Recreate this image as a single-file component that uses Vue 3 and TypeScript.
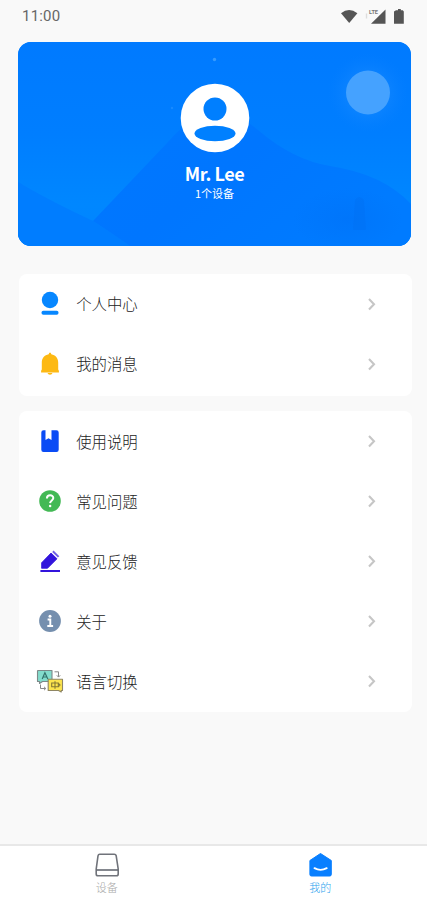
<script setup lang="ts">
import { ref } from 'vue'

type IconName = 'user' | 'bell' | 'book' | 'help' | 'pen' | 'info' | 'lang'
interface MenuItem {
  icon: IconName
  label: string
}

const groups: MenuItem[][] = [
  [
    { icon: 'user', label: '个人中心' },
    { icon: 'bell', label: '我的消息' },
  ],
  [
    { icon: 'book', label: '使用说明' },
    { icon: 'help', label: '常见问题' },
    { icon: 'pen', label: '意见反馈' },
    { icon: 'info', label: '关于' },
    { icon: 'lang', label: '语言切换' },
  ],
]

const activeTab = ref<'devices' | 'mine'>('mine')
</script>

<template>
  <div class="screen">
    <header class="status">
      <span class="time">11:00</span>
      <svg class="signals" width="66" height="20" viewBox="0 0 66 20">
        <path d="M2 7.200Q10 1 18.400 7.200L10.200 17Z" fill="#555" />
        <path d="M27.500 7.500v5" stroke="#ddd" stroke-width="1.400" />
        <text x="30" y="8.200" font-size="6.200" font-weight="700" textLength="9" lengthAdjust="spacingAndGlyphs" fill="#777">LTE</text>
        <path d="M46.500 3.500V17.800H32Z" fill="#555" />
        <path d="M57 4.200h2V3h2.800v1.200h2L64.800 5.500V17.800H55V5.500Z" fill="#555" />
      </svg>
    </header>

    <section class="profile">
      <svg class="scene" viewBox="0 0 393 204" preserveAspectRatio="none">
        <defs>
          <linearGradient id="sky" x1="0" y1="0" x2="0" y2="1">
            <stop offset="0" stop-color="#007aff" />
            <stop offset=".45" stop-color="#007eff" />
            <stop offset=".8" stop-color="#0087ff" />
            <stop offset="1" stop-color="#0084ff" />
          </linearGradient>
          <linearGradient id="hill" x1="0" y1="0" x2="1" y2=".5">
            <stop offset="0" stop-color="#0078ff" />
            <stop offset=".5" stop-color="#0076ff" />
            <stop offset="1" stop-color="#007bff" />
          </linearGradient>
          <radialGradient id="glow">
            <stop offset=".5" stop-color="#1c8cff" stop-opacity=".4" />
            <stop offset="1" stop-color="#0a80ff" stop-opacity="0" />
          </radialGradient>
          <radialGradient id="shade">
            <stop offset="0" stop-color="#006ff5" stop-opacity=".45" />
            <stop offset="1" stop-color="#006ff5" stop-opacity="0" />
          </radialGradient>
        </defs>
        <rect width="393" height="204" fill="url(#sky)" />
        <path d="M0 140Q30 158 75 179Q95 192 112 204H0Z" fill="#007dff" />
        <path d="M75 179L150 100Q195 48 240 88Q275 118 312 124Q365 132 393 162V204H112Q92 190 75 179Z" fill="url(#hill)" />
        <ellipse cx="330" cy="178" rx="55" ry="32" fill="url(#shade)" />
        <path d="M337 158q4-6 9 0l2 30h-13Z" fill="#006df0" opacity=".3" />
        <circle cx="350" cy="51" r="40" fill="url(#glow)" />
        <circle cx="350" cy="50.500" r="22" fill="#45a2ff" />
        <circle cx="196.500" cy="17.500" r="1.700" fill="#369bff" />
        <circle cx="154" cy="66" r="1.200" fill="#188aff" />
      </svg>
      <svg class="avatar" width="70" height="70" viewBox="0 0 70 70">
        <circle cx="35" cy="35" r="34.300" fill="#fff" />
        <circle cx="35" cy="26" r="11.500" fill="#007fff" />
        <ellipse cx="35" cy="50.500" rx="20.500" ry="7.700" fill="#0080ff" />
      </svg>
      <h1 class="name">Mr. Lee</h1>
      <p class="count">1个设备</p>
    </section>

    <main class="groups">
      <ul v-for="(group, index) in groups" :key="index" class="group">
        <li v-for="item in group" :key="item.icon" class="row">
          <svg class="icon" width="28" height="28" viewBox="0 0 28 28">
            <template v-if="item.icon === 'user'">
              <circle cx="14" cy="10" r="8.200" fill="#0787ff" />
              <rect x="5.500" y="20.800" width="17" height="4" rx="1.800" fill="#0787ff" />
            </template>
            <template v-else-if="item.icon === 'bell'">
              <path d="M14 2.500q1 0 1.300 1.700c4.200.8 6.900 4 6.900 8.300v7l.7 1.200v1.700H5.100v-1.700l.7-1.200v-7c0-4.300 2.700-7.500 6.900-8.300Q13 2.500 14 2.500Z" fill="#fdb913" />
              <path d="M11.500 23h5q-.5 1.700-2.500 1.700t-2.500-1.700Z" fill="#fdb913" />
            </template>
            <path
              v-else-if="item.icon === 'book'"
              d="M5.300 5.500Q5.300 3.300 7.500 3.300H9.500V13L12.500 11.200L15.500 13V3.300H20.500Q22.700 3.300 22.700 5.500V22.700Q22.700 24.900 20.500 24.900H7.500Q5.300 24.900 5.300 22.700Z"
              fill="#0a4bf5"
            />
            <template v-else-if="item.icon === 'help'">
              <circle cx="14" cy="14" r="10.800" fill="#43b955" />
              <path d="M10.900 11.400c.1-4 6.500-4 6.400-.3 0 2.300-3.100 2.400-3.200 5" fill="none" stroke="#fff" stroke-width="2" />
              <circle cx="14.100" cy="19" r="1.250" fill="#fff" />
            </template>
            <template v-else-if="item.icon === 'pen'">
              <path d="M5.600 21.300V15.800L15 6L21 11.800L11.500 21.300Z" fill="#3214dc" stroke="#3214dc" stroke-width=".8" stroke-linejoin="round" />
              <path d="M16.200 4.900L17.600 3.500L23.300 9.200L21.900 10.600Z" fill="#6f5fe6" />
              <rect x="4.400" y="23" width="19.600" height="2" fill="#3214dc" />
            </template>
            <template v-else-if="item.icon === 'info'">
              <circle cx="14" cy="14" r="10.900" fill="#758fae" />
              <circle cx="14" cy="9.300" r="1.500" fill="#fff" />
              <path d="M11.600 12.500h2.700v6.200M11.300 19h5.800" fill="none" stroke="#fff" stroke-width="1.900" />
            </template>
            <template v-else>
              <path d="M2 3.500H16V14.500H6.500L3.500 16.500V14.500H1.500V4Z" fill="#83dccc" stroke="#7d8989" stroke-width="1.100" stroke-linejoin="round" />
              <path d="M6.200 12L8.900 5.800L11.800 12M7.300 10h3.400" fill="none" stroke="#34736c" stroke-width="1.200" />
              <path d="M18.500 4.800h4v5M20.800 8.300l1.700 1.800 1.700-1.800M4.500 17.500v4h5M8 19.800l1.800 1.700L8 23.200" fill="none" stroke="#888" stroke-width="1" />
              <path d="M12.200 12.200H26.500V23.500H25.200V25L22.500 23.500H12.200Z" fill="#fce44d" stroke="#8f8664" stroke-width="1.100" stroke-linejoin="round" />
              <path d="M15.700 16h6.600v3.800h-6.600ZM19 14.300v7.500M22 16l2 2-2 2" fill="none" stroke="#857a34" stroke-width="1.100" />
            </template>
          </svg>
          <span class="label">{{ item.label }}</span>
          <svg class="chevron" width="10" height="14" viewBox="0 0 10 14">
            <path d="M2 2L7 7.200L2 12.400" fill="none" stroke="#c6c6c6" stroke-width="2.100" />
          </svg>
        </li>
      </ul>
    </main>

    <nav class="tabs">
      <button class="tab" :class="{ active: activeTab === 'devices' }" @click="activeTab = 'devices'">
        <svg width="28" height="26" viewBox="0 0 28 26">
          <path d="M6.700 2.200H21.300Q22.800 2.200 23.200 3.800L25.200 17V22Q25.200 23.800 23.400 23.800H5Q3.200 23.800 3.200 22V17L5 3.800Q5.300 2.200 6.700 2.200Z" fill="#fff" stroke="#70737a" stroke-width="1.600" />
          <path d="M3.400 18H25" stroke="#666a72" stroke-width="1.600" />
        </svg>
        <span>设备</span>
      </button>
      <button class="tab" :class="{ active: activeTab === 'mine' }" @click="activeTab = 'mine'">
        <svg width="28" height="26" viewBox="0 0 28 26">
          <path d="M14.500 1.500L25.300 8.500V22.500Q25.300 24 23.800 24H5.400Q3.900 24 3.900 22.500V8.500Z" fill="#087fff" stroke="#087fff" stroke-width="1" stroke-linejoin="round" />
          <path d="M8.500 16.200Q14.500 19.500 20.700 16.200" fill="none" stroke="#fff" stroke-width="1.900" stroke-linecap="round" />
        </svg>
        <span>我的</span>
      </button>
    </nav>
  </div>
</template>

<style>
body {
  background: #f9f9f9;
}
</style>

<style scoped>
.screen {
  display: flex;
  flex-direction: column;
  box-sizing: border-box;
  width: 100%;
  height: 100vh;
  overflow: hidden;
  background: #f9f9f9;
  font-family: Roboto, 'Noto Sans CJK SC', sans-serif;
}
.status {
  display: flex;
  flex: none;
  justify-content: space-between;
  height: 42px;
  padding: 6px 22px 0;
  box-sizing: border-box;
}
.time {
  font-size: 15px;
  line-height: 20px;
  letter-spacing: 0.2px;
  color: #666;
}
.signals {
  font-family: Roboto, sans-serif;
}
.profile {
  position: relative;
  display: flex;
  flex: none;
  flex-direction: column;
  align-items: center;
  height: 204px;
  margin: 0 16px 0 18px;
  padding-top: 41px;
  box-sizing: border-box;
  border-radius: 13px;
  overflow: hidden;
  background: #007cff;
  color: #fff;
}
.scene {
  position: absolute;
  inset: 0;
  width: 100%;
  height: 100%;
}
.avatar,
.name,
.count {
  position: relative;
}
.name {
  margin: 10px 0 5px;
  font: 700 18px/20px Roboto, 'Noto Sans CJK SC', sans-serif;
  font-family: 'Noto Sans CJK SC', sans-serif;
  letter-spacing: -0.45px;
}
.count {
  margin: 0;
  font: 400 11px/11px 'Noto Sans CJK SC', sans-serif;
}
.groups {
  display: flex;
  flex: 1;
  flex-direction: column;
  gap: 15px;
  padding: 27.5px 15px 0 19px;
}
.group {
  margin: 0;
  padding: 0 0 1px;
  border-radius: 8px;
  background: #fff;
  list-style: none;
}
.group:first-child {
  padding-bottom: 2.5px;
}
.row {
  display: flex;
  align-items: center;
  height: 60px;
  padding: 0 35px 0 17px;
}
.label {
  flex: 1;
  margin: -1px 0 0 12.2px;
  font: 300 15.4px/22px 'Noto Sans CJK SC', sans-serif;
  color: #222;
}
.tabs {
  display: flex;
  flex: none;
  height: 56px;
  box-sizing: border-box;
  border-top: 2px solid #e8e8e8;
  background: #fff;
}
.tab {
  display: flex;
  flex: 1;
  flex-direction: column;
  align-items: center;
  padding: 6px 0 0;
  border: 0;
  background: none;
  font: 300 11px/19px 'Noto Sans CJK SC', sans-serif;
  color: #aaa;
}
.tab.active {
  color: #2ba2ee;
}
</style>
